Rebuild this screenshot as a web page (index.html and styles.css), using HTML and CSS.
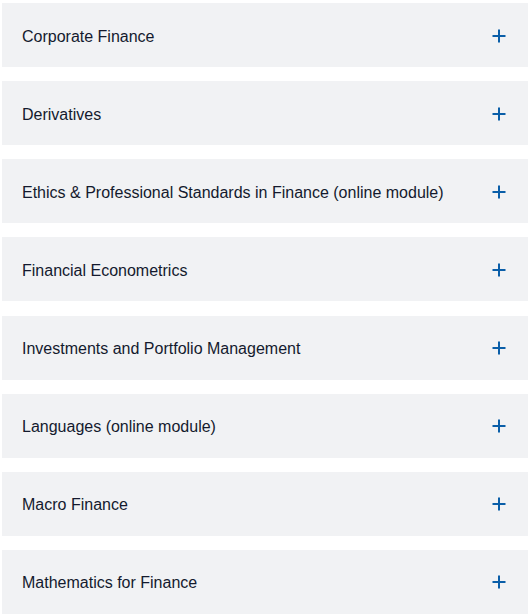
FILE: index.html
```html
<!DOCTYPE html>
<html lang="en">
<head>
<meta charset="utf-8">
<title>Courses</title>
<link rel="stylesheet" href="styles.css">
</head>
<body>
<div class="accordion">
  <div class="item"><span class="label">Corporate Finance</span><svg class="plus" viewBox="0 0 14 14" width="14" height="14"><path d="M7 0.5V13.5M0.5 7H13.5"/></svg></div>
  <div class="item"><span class="label">Derivatives</span><svg class="plus" viewBox="0 0 14 14" width="14" height="14"><path d="M7 0.5V13.5M0.5 7H13.5"/></svg></div>
  <div class="item"><span class="label">Ethics &amp; Professional Standards in Finance (online module)</span><svg class="plus" viewBox="0 0 14 14" width="14" height="14"><path d="M7 0.5V13.5M0.5 7H13.5"/></svg></div>
  <div class="item"><span class="label">Financial Econometrics</span><svg class="plus" viewBox="0 0 14 14" width="14" height="14"><path d="M7 0.5V13.5M0.5 7H13.5"/></svg></div>
  <div class="item"><span class="label">Investments and Portfolio Management</span><svg class="plus" viewBox="0 0 14 14" width="14" height="14"><path d="M7 0.5V13.5M0.5 7H13.5"/></svg></div>
  <div class="item"><span class="label">Languages (online module)</span><svg class="plus" viewBox="0 0 14 14" width="14" height="14"><path d="M7 0.5V13.5M0.5 7H13.5"/></svg></div>
  <div class="item"><span class="label">Macro Finance</span><svg class="plus" viewBox="0 0 14 14" width="14" height="14"><path d="M7 0.5V13.5M0.5 7H13.5"/></svg></div>
  <div class="item"><span class="label">Mathematics for Finance</span><svg class="plus" viewBox="0 0 14 14" width="14" height="14"><path d="M7 0.5V13.5M0.5 7H13.5"/></svg></div>
</div>
</body>
</html>
```
FILE: styles.css
```css
html, body {
  margin: 0;
  padding: 0;
  background: #ffffff;
}
body {
  font-family: "Liberation Sans", Arial, sans-serif;
}
.accordion {
  display: flex;
  flex-direction: column;
  gap: 14.15px;
  padding: 3px 2px 0 2px;
}
.item {
  height: 64px;
  box-sizing: border-box;
  background: #f1f2f4;
  display: flex;
  align-items: center;
  justify-content: space-between;
  padding: 1px 22px 0 20px;
}
.label {
  font-size: 16px;
  color: #141a2e;
  line-height: 20px;
  padding-top: 2px;
}
.plus {
  display: block;
  flex: none;
}
.plus path {
  stroke: #0a5ea8;
  stroke-width: 2;
  fill: none;
}
```
